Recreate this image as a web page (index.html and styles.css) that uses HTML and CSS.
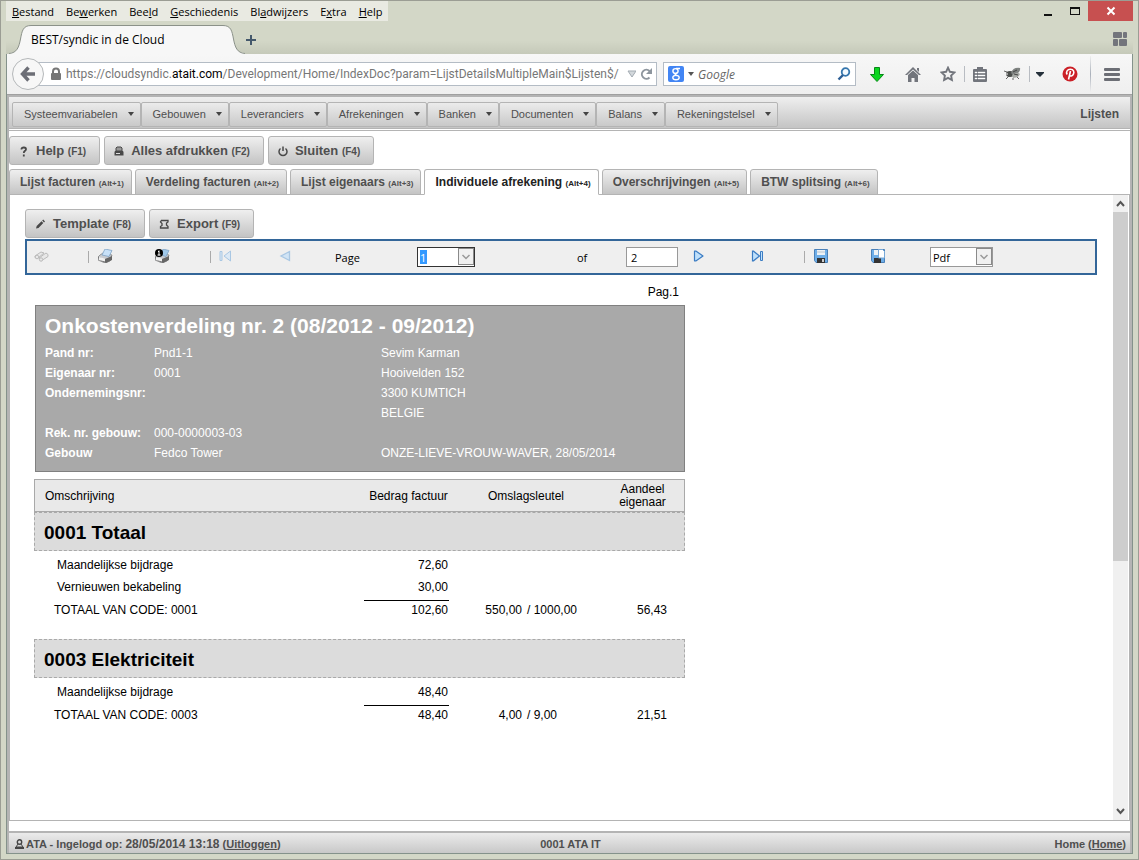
FILE: index.html
```html
<!DOCTYPE html>
<html lang="nl">
<head>
<meta charset="utf-8">
<title>BEST/syndic in de Cloud</title>
<link rel="stylesheet" href="styles.css">
</head>
<body>
<div class="window">
  <header class="titlebar">
    <nav class="menubar" aria-label="Menubalk">
      <button><u>B</u>estand</button><button>Be<u>w</u>erken</button><button>Bee<u>l</u>d</button><button><u>G</u>eschiedenis</button><button>Bl<u>a</u>dwijzers</button><button>E<u>x</u>tra</button><button><u>H</u>elp</button>
    </nav>
    <div class="window-controls">
      <button aria-label="Minimaliseren"><svg width="12" height="12"><path d="M2 9h8v2H2z" fill="#111"/></svg></button>
      <button aria-label="Maximaliseren"><svg width="12" height="9"><path d="M1 0h10v8H1zM2 2v5h8V2z" fill="#111" fill-rule="evenodd"/></svg></button>
      <button class="close" aria-label="Sluiten"><svg width="10" height="10"><path d="M1.500 1.500l7 7M8.500 1.500l-7 7" stroke="#fff" stroke-width="2"/></svg></button>
    </div>
  </header>

  <div class="tabstrip">
    <svg class="curve" width="22" height="29" viewBox="0 0 22 29"><path d="M0 29V28C8 28 10 22 11.500 14S14 .5 22 .5V29z" fill="#f7f7f7"/><path d="M0 28.500C8 28 10 22 11.500 14S14 .5 22 .5" fill="none" stroke="#8b9189"/></svg>
    <div class="browser-tab">BEST/syndic in de Cloud</div>
    <svg class="curve" width="22" height="29" viewBox="0 0 22 29"><path d="M22 29V28C14 28 12 22 10.500 14S8 .5 0 .5V29z" fill="#f7f7f7"/><path d="M22 28.500C14 28 12 22 10.500 14S8 .5 0 .5" fill="none" stroke="#8b9189"/></svg>
    <button class="new-tab" aria-label="Nieuw tabblad"><svg width="12" height="12"><path d="M5 1h2v4h4v2H7v4H5V7H1V5h4z" fill="#44586b"/></svg></button>
    <button class="groups" aria-label="Tabgroepen"><svg width="14" height="14" fill="#73757c"><rect width="9" height="6" rx="1"/><rect x="10" width="4" height="6" rx="1"/><rect y="7" width="5" height="7" rx="1"/><rect x="6" y="7" width="8" height="7" rx="1"/></svg></button>
  </div>

  <div class="page-frame">
    <div class="navbar">
      <button class="back" aria-label="Terug"><svg width="16" height="16"><path d="M8.500 1.500L2.500 8l6 6.500M3 8h12" fill="none" stroke="#6c6e76" stroke-width="3.400"/></svg></button>
      <div class="location">
        <svg width="12" height="14"><path d="M3 7V4.500a3 3 0 0 1 6 0V7" fill="none" stroke="#777" stroke-width="2"/><rect x="1" y="6" width="10" height="7" rx="1" fill="#777"/></svg>
        <div class="url" role="textbox" contenteditable="true" spellcheck="false" aria-label="Adres">https://cloudsyndic.<b>atait.com</b>/Development/Home/IndexDoc?param=LijstDetailsMultipleMain$Lijsten$/</div>
        <svg width="10" height="8"><path d="M1 1h8L5 7z" fill="#d3d8dc" stroke="#a3abb2"/></svg>
        <button aria-label="Vernieuwen"><svg width="13" height="13"><path d="M9.500 9.500A4.500 4.500 0 1 1 9.500 3" fill="none" stroke="#8e969e" stroke-width="2"/><path d="M12 0v6H6z" fill="#8e969e"/></svg></button>
      </div>
      <div class="search">
        <svg width="16" height="16"><rect width="16" height="16" rx="2" fill="#4285f4"/><g fill="none" stroke="#fff" stroke-width="1.400"><ellipse cx="7.500" cy="5" rx="2.600" ry="2.400"/><path d="M8 2.500h4M9 7c-3 1-2 2 0 2.500"/><ellipse cx="8" cy="11.600" rx="3.200" ry="2.200"/></g></svg>
        <svg width="6" height="4"><path d="M0 0h6L3 4z" fill="#555"/></svg>
        <input type="text" placeholder="Google" aria-label="Zoeken">
        <svg width="14" height="14"><circle cx="8.500" cy="5" r="3.800" fill="#f4faff" stroke="#3576ad" stroke-width="1.800"/><path d="M6 8L1.500 12.500" stroke="#2d5f95" stroke-width="2.400"/></svg>
      </div>
      <div class="nav-icons">
        <button aria-label="Download"><svg width="14" height="15"><path d="M4.500.5h5v7h4L7 14.500.5 7.500h4z" fill="#0bd620" stroke="#078817"/></svg></button>
        <button aria-label="Startpagina"><svg width="16" height="15" fill="#72757c"><path d="M8 0l8 8H14L8 2.500 2 8H0z"/><path d="M12 1h2v4l-2-2zM3 8l5-4.500L13 8v7H9.500v-4h-3v4H3z"/></svg></button>
        <button aria-label="Bladwijzer"><svg width="16" height="16"><path d="M8 1.700l1.900 4.100 4.500.6-3.300 3.100.8 4.500L8 11.900 4.100 14l.8-4.500L1.600 6.400l4.500-.6z" fill="none" stroke="#72757c" stroke-width="1.900"/></svg></button>
        <i></i>
        <button aria-label="Bladwijzers tonen"><svg width="14" height="15"><path d="M1 2h3V0h6v2h3q1 0 1 1v11q0 1-1 1H1q-1 0-1-1V3q0-1 1-1z" fill="#72757c"/><path d="M2 5h2v1H2zM5 5h7v1H5zM2 8h2v1H2zM5 8h7v1H5zM2 11h2v1H2zM5 11h7v1H5z" fill="#fff" stroke="#fff" stroke-width=".4"/></svg></button>
        <button aria-label="Firebug"><svg width="17" height="14"><path d="M3 5L0 4M5 9L2 12M9 11v2M13 10l2 2" stroke="#666"/><ellipse cx="6" cy="7" rx="4" ry="3" fill="#4b4e4c"/><path d="M7 6q2-6 9-5 1 4-6 8z" fill="#7e8280"/><path d="M8 8q5-4 8-1-1 4-7 4z" fill="#a6a9a5"/><path d="M9 5l4-2M10 7l4 1" stroke="#444"/><circle cx="3" cy="7" r="1" fill="#bbb"/></svg></button>
        <i></i>
        <button aria-label="Meer"><svg width="8" height="5"><path d="M0 0h8v1L4 5 0 1z" fill="#25303b"/></svg></button>
        <button aria-label="Pinterest"><svg width="16" height="16"><circle cx="8" cy="8" r="7.500" fill="#cb2027"/><path d="M6.500 13.500L8.500 5M5.200 8.500C3.500 6 5.500 3.200 8.500 3.300c3 .1 4 2.600 2.900 4.900-1 2.200-3.100 2.200-3.800.8" fill="none" stroke="#fff" stroke-width="1.600"/></svg></button>
        <i class="tall"></i>
        <button aria-label="Menu"><svg width="16" height="13" fill="#6c6e75"><rect width="16" height="3" rx="1"/><rect y="5" width="16" height="3" rx="1"/><rect y="10" width="16" height="3" rx="1"/></svg></button>
      </div>
    </div>

    <div class="app">
      <div class="app-menu">
        <nav aria-label="Hoofdmenu">
          <button>Systeemvariabelen</button><button>Gebouwen</button><button>Leveranciers</button><button>Afrekeningen</button><button>Banken</button><button>Documenten</button><button>Balans</button><button>Rekeningstelsel</button>
        </nav>
        <strong>Lijsten</strong>
      </div>
      <main>
        <div class="actions">
          <button class="action"><svg width="12" height="12"><path d="M3.500 4.500V3.800C4 2 8 2 8 4.200 8 6 5.800 5.500 5.800 8M5.800 9.500v2" fill="none" stroke="#484848" stroke-width="1.800"/></svg>Help <small>(F1)</small></button>
          <button class="action"><svg width="12" height="12"><path d="M3 6V3l1-1h4l1 1v3z" fill="#999" stroke="#484848"/><path d="M2 6h8l.5 1v3.500h-9V7z" fill="#484848"/><path d="M3 8.500h4" stroke="#ddd"/></svg>Alles afdrukken <small>(F2)</small></button>
          <button class="action"><svg width="12" height="12"><path d="M3.500 3.500a4 4 0 1 0 5 0M6 1.500V6" fill="none" stroke="#484848" stroke-width="1.500"/></svg>Sluiten <small>(F4)</small></button>
        </div>
        <div class="tabs" role="tablist">
          <button role="tab">Lijst facturen <small>(Alt+1)</small></button>
          <button role="tab">Verdeling facturen <small>(Alt+2)</small></button>
          <button role="tab">Lijst eigenaars <small>(Alt+3)</small></button>
          <button role="tab" class="active" aria-selected="true">Individuele afrekening <small>(Alt+4)</small></button>
          <button role="tab">Overschrijvingen <small>(Alt+5)</small></button>
          <button role="tab">BTW splitsing <small>(Alt+6)</small></button>
        </div>
        <section class="panel">
          <div class="panel-content">
            <div class="actions">
              <button class="action"><svg width="12" height="12"><path d="M2 10.500l.7-2.400 4.800-4.800 1.800 1.800-4.800 4.800zM8.200 2.600l1-1 1.800 1.800-1 1z" fill="#484848"/></svg>Template <small>(F8)</small></button>
              <button class="action"><svg width="12" height="12"><path d="M3.500 2.500h6.500v1.500L8.500 5v2l1.500 1.500V10H2.500V8.500L4 7.500v-2L2.500 4z" fill="none" stroke="#484848" stroke-width="1.300"/></svg>Export <small>(F9)</small></button>
            </div>
            <div class="viewer-bar">
              <button aria-label="Zoeken"><svg width="15" height="12"><g stroke="#bbb" fill="#e8e8e8"><path d="M1 6l6-4 3 1-6 5-3-.5z"/><path d="M5 8l7-5 2 1.500v2L7 11z"/><circle cx="3" cy="7" r="1.800"/><circle cx="7" cy="9.500" r="1.700"/></g></svg></button>
              <i></i>
              <button aria-label="Afdrukken"><svg width="15" height="14"><path d="M2 6l3-2 9 2-2 6-5 2-7-3V8z" fill="#c8cbd0" stroke="#777" stroke-width=".7"/><path d="M0 8l7 2 7-3v4l-6 3-7-3z" fill="#666"/><path d="M1 8l6 1.500v3L1 11z" fill="#f0f0f0"/><path d="M4 6l3-6 7 1.500-3 6z" fill="#c8e1f8" stroke="#7fa3c6" stroke-width=".8"/></svg></button>
              <button aria-label="Huidige pagina afdrukken"><svg width="15" height="14"><path d="M2 6l3-2 9 2-2 6-5 2-7-3V8z" fill="#c8cbd0" stroke="#777" stroke-width=".7"/><path d="M0 8l7 2 7-3v4l-6 3-7-3z" fill="#666"/><path d="M1 8l6 1.500v3L1 11z" fill="#f0f0f0"/><path d="M6 6l2-6 6 1.500-3 6z" fill="#9fc8ea" stroke="#7fa3c6" stroke-width=".8"/><circle cx="4" cy="4" r="4"/><path d="M4 1.500v5M2.500 6h3M3 2.500h1" stroke="#fff"/></svg></button>
              <i></i>
              <button aria-label="Eerste pagina"><svg width="13" height="12"><path d="M1 1.500h2v9H1zM11.500 1v10L5 6z" fill="#dbe9f6" stroke="#a9c7e3"/></svg></button>
              <button aria-label="Vorige pagina"><svg width="12" height="12"><path d="M10.500 1.500v9L2 6z" fill="#d1e4f5" stroke="#a9c7e3" stroke-width="1.300"/></svg></button>
              <label for="page">Page</label>
              <span class="combo page-combo"><select id="page"><option>1</option><option>2</option></select><svg width="16" height="17"><rect x=".5" y=".5" width="15" height="16" fill="#f0f0f0" stroke="#8a8a8a"/><path d="M4.500 7L8 10.500 11.500 7" fill="none" stroke="#999" stroke-width="1.500"/></svg></span>
              <label for="total">of</label>
              <input class="total" id="total" type="text" value="2" readonly>
              <button aria-label="Volgende pagina"><svg width="12" height="12"><path d="M1.500 1.200v9.600h1.700L10 6 3.200 1.200z" fill="#bfe0fb" stroke="#3b7cc3" stroke-width="1.200" stroke-linejoin="round"/></svg></button>
              <button aria-label="Laatste pagina"><svg width="13" height="12"><path d="M1.500 1.200v9.600h1L8.500 6l-6-4.800z" fill="#bfe0fb" stroke="#3b7cc3" stroke-width="1.200"/><path d="M9.500 1.500h2v9h-2z" fill="#bfe0fb" stroke="#3b7cc3"/></svg></button>
              <i></i>
              <button aria-label="Opslaan"><svg width="14" height="14"><path d="M.5.5h13v13H2l-1.500-2z" fill="#6eaee8" stroke="#4a80b8"/><path d="M3 1h8v5H3z" fill="#edf2f6"/><path d="M3 3h8" stroke="#b9c5d0"/><path d="M3 9h8v5H3z" fill="#333"/><path d="M8 10h2v3H8z" fill="#ccc"/></svg></button>
              <button aria-label="Opslaan in venster"><svg width="14" height="14"><path d="M.5.5h13v13H2l-1.500-2z" fill="#6eaee8" stroke="#4a80b8"/><path d="M3 1h5v5H3z" fill="#edf2f6"/><path d="M3 9h7v5H3z" fill="#333"/><path d="M7.500.5h4l2 2V9h-6z" fill="#fff" stroke="#76a8d8"/></svg></button>
              <span class="combo format-combo"><select aria-label="Formaat"><option>Pdf</option></select><svg width="16" height="17"><rect x=".5" y=".5" width="15" height="16" fill="#f0f0f0" stroke="#8a8a8a"/><path d="M4.500 7L8 10.500 11.500 7" fill="none" stroke="#999" stroke-width="1.500"/></svg></span>
            </div>

            <article class="report">
              <p class="page-no">Pag.1</p>
              <header class="summary">
                <h1>Onkostenverdeling nr. 2 (08/2012 - 09/2012)</h1>
                <div class="details">
                  <b>Pand nr:</b><span>Pnd1-1</span><span>Sevim Karman</span>
                  <b>Eigenaar nr:</b><span>0001</span><span>Hooivelden 152</span>
                  <b>Ondernemingsnr:</b><span></span><span>3300 KUMTICH</span>
                  <span></span><span></span><span>BELGIE</span>
                  <b>Rek. nr. gebouw:</b><span>000-0000003-03</span><span></span>
                  <b>Gebouw</b><span>Fedco Tower</span><span>ONZE-LIEVE-VROUW-WAVER, 28/05/2014</span>
                </div>
              </header>
              <table>
                <colgroup><col><col class="c-amount"><col class="c-key"><col class="c-base"><col class="c-share"></colgroup>
                <thead><tr><th class="first">Omschrijving</th><th>Bedrag factuur</th><th colspan="2">Omslagsleutel</th><th>Aandeel eigenaar</th></tr></thead>
                <tbody>
                  <tr class="section"><th colspan="5"><h2>0001 Totaal</h2></th></tr>
                  <tr class="item"><td>Maandelijkse bijdrage</td><td>72,60</td><td></td><td></td><td></td></tr>
                  <tr class="item"><td>Vernieuwen bekabeling</td><td>30,00</td><td></td><td></td><td></td></tr>
                  <tr class="sum"><td>TOTAAL VAN CODE: 0001</td><td class="amount"><div>102,60</div></td><td>550,00</td><td class="base">/ 1000,00</td><td class="share">56,43</td></tr>
                </tbody>
                <tbody>
                  <tr class="section"><th colspan="5"><h2>0003 Elektriciteit</h2></th></tr>
                  <tr class="item"><td>Maandelijkse bijdrage</td><td>48,40</td><td></td><td></td><td></td></tr>
                  <tr class="sum"><td>TOTAAL VAN CODE: 0003</td><td class="amount"><div>48,40</div></td><td>4,00</td><td class="base">/ 9,00</td><td class="share">21,51</td></tr>
                </tbody>
              </table>
            </article>
          </div>
          <div class="scrollbar" aria-hidden="true">
            <svg width="15" height="17"><path d="M4 11l3.500-4L11 11" fill="none" stroke="#555" stroke-width="2"/></svg>
            <div class="track"><div class="thumb"></div></div>
            <svg width="15" height="17"><path d="M4 6l3.500 4L11 6" fill="none" stroke="#555" stroke-width="2"/></svg>
          </div>
        </section>
      </main>
      <footer>
        <span class="user"><svg width="9" height="10"><circle cx="4.500" cy="3" r="2.200" fill="none" stroke="#444" stroke-width="1.400"/><path d="M3 5L1 8h7L6 5" fill="none" stroke="#444"/><path d="M0 8h9v2H0z" fill="#444"/></svg>ATA - Ingelogd op: <b>28/05/2014 13:18</b> (<a href="#">Uitloggen</a>)</span>
        <span>0001 ATA IT</span>
        <span class="home">Home (<a href="#">Home</a>)</span>
      </footer>
    </div>
  </div>
</div>
</body>
</html>
```

FILE: styles.css
```css
* { box-sizing: border-box; }
body { margin: 0; font-family: "Liberation Sans", Arial, sans-serif; font-size: 12px; color: #000; }
button, input, select { font: inherit; color: inherit; margin: 0; }
button { border: 0; padding: 0; background: none; display: flex; align-items: center; justify-content: center; }
svg { display: block; flex: none; }
a { color: inherit; }

.window {
  height: 100vh; display: flex; flex-direction: column;
  border: 1px solid #9b9d94; background: #d3d7c7; padding: 0 5px 5px;
}

.titlebar { display: flex; justify-content: space-between; height: 20px; font-family: "Open Sans", "Noto Sans", sans-serif; font-size: 11px; }
.menubar { display: flex; gap: 12px; padding: 0 6px; background: #e9eae2; }
.window-controls { display: flex; }
.window-controls button { width: 27px; }
.window-controls .close { width: 45px; background: #c75050; }

.tabstrip {
  display: flex; align-items: flex-end; height: 33px; padding-left: 3px; margin-bottom: -1px;
  position: relative; z-index: 1;
  font-family: "Open Sans", "Noto Sans", sans-serif;
  background: linear-gradient(#d3d7c7 60%, #c5c9b9);
}
.browser-tab { width: 192px; height: 29px; background: #f7f7f7; border-top: 1px solid #8b9189; line-height: 28px; }
.new-tab { width: 12px; height: 28px; }
.groups { margin-left: auto; width: 26px; height: 30px; }

.page-frame { flex: 1; min-height: 0; display: flex; flex-direction: column; border: 1px solid #84928b; }
.navbar {
  display: flex; align-items: center; height: 41px; padding-left: 5px;
  background: linear-gradient(#f7f7f7, #efefef); border-bottom: 1px solid #a0a0a0;
  font-family: "Open Sans", "Noto Sans", sans-serif; font-size: 12px;
}
.back { width: 32px; height: 32px; border: 1px solid #b5b8ba; border-radius: 50%; background: #f7f7f7; position: relative; z-index: 1; flex: none; }
.location, .search { display: flex; align-items: center; height: 24px; background: #fff; border: 1px solid #b4bcc5; }
.location { flex: 1; min-width: 0; margin-left: -12px; padding: 0 3px 0 17px; gap: 4px; }
.url { flex: 1; min-width: 0; overflow: hidden; white-space: nowrap; color: #777; line-height: 20px; font-family: Roboto, sans-serif; }
.url b { font-weight: normal; color: #000; }
.location svg:nth-of-type(2) { width: 9px; }
.search { width: 193px; margin: 0 3px 0 6px; padding: 0 4px; gap: 4px; }
.search input { flex: 1; min-width: 0; border: 0; padding: 0; background: none; font-style: italic; }
.search input::placeholder { color: #666; opacity: 1; }
.nav-icons { display: grid; grid-template-columns: 36px 36px 33px 1px 30px 34px 1px 20px 40px 1px 41px; align-items: center; height: 40px; }
.nav-icons button { height: 24px; }
.nav-icons i { height: 16px; background: #b8bcc2; }
.nav-icons .tall { height: 36px; background: linear-gradient(#efefef, #a9b0ba, #efefef); }

.app { flex: 1; min-height: 0; display: flex; flex-direction: column; background: #fff; border: 2px solid #b4b4b4; border-bottom: 0; color: #4f4f4f; }
.app-menu {
  display: flex; align-items: center; justify-content: space-between; height: 32px; padding: 3px 11px 0 3px;
  background: linear-gradient(#efefef, #c4c4c4); border-bottom: 1px solid #b4b4b4;
}
.app-menu nav { display: flex; }
.app-menu button {
  height: 25px; font-size: 11px; padding: 0 6px 0 11px; border: 1px solid #b4b4b4; border-radius: 2px;
  background: linear-gradient(#ebebeb, #c9c9c9);
}
.app-menu button::after { content: ""; margin-left: 10px; border: 3px solid transparent; border-top: 4px solid #444; border-bottom: 0; }

main { flex: 1; min-height: 0; display: flex; flex-direction: column; margin-top: 1px; padding-bottom: 10px; background: #fff; border-top: 1px solid #b4b4b4; }
.actions { display: flex; gap: 4px; }
main > .actions { padding-top: 5px; }
.action {
  height: 29px; padding: 0 13px 0 8px; border: 1px solid #b4b4b4; border-radius: 3px;
  background: linear-gradient(#efefef, #c4c4c4); font-weight: bold; font-size: 13px; white-space: pre;
}
.action svg { margin-right: 6px; }
.action small { font-size: 10px; padding-top: 2px; }

.tabs { display: flex; gap: 3px; margin-top: 4px; position: relative; z-index: 1; }
.tabs button {
  height: 26px; padding: 0 7px 0 10px; border: 1px solid #b4b4b4; border-radius: 3px 3px 0 0;
  background: linear-gradient(#efefef, #c4c4c4); font-size: 12px; font-weight: bold; white-space: pre;
}
.tabs small { font-size: 8px; padding-top: 2px; }
.tabs .active { background: #fff; border-bottom-color: #fff; color: #222; }

.panel { flex: 1; min-height: 0; display: flex; margin-top: -1px; border: 1px solid #b4b4b4; color: #000; }
.panel-content { flex: 1; min-width: 0; padding: 14px 16px 0 15px; overflow: hidden; }
.panel .actions { color: #4f4f4f; }
.panel .action svg { margin-right: 7px; }
.scrollbar { width: 15px; margin-right: 1px; display: flex; flex-direction: column; background: #f0f0f0; }
.track { flex: 1; }
.thumb { height: 59%; background: #cdcdcd; }

.viewer-bar {
  display: grid; align-items: center; height: 36px; margin-top: 1px; padding-left: 7px;
  grid-template-columns: 54px 10px 57px 55px 9px 60px 56px 82px 160px 49px 67px 58px 53px 10px 57px 59px 1fr;
  background: #efefef; border: 2px solid #369; font-family: "Open Sans", "Noto Sans", sans-serif; font-size: 11px;
}
.viewer-bar button { justify-content: flex-start; padding-bottom: 2px; }
.viewer-bar i { width: 1px; height: 12px; background: #aaa; }
.total { width: 52px; height: 20px; border: 1px solid #999; padding: 0 4px; background: #fff; }
.combo { position: relative; height: 20px; border: 1px solid #999; background: #fff; }
.combo select { appearance: none; width: 100%; height: 18px; border: 0; padding: 0 2px; background: none; display: block; }
.combo svg { position: absolute; right: 0; top: 0; pointer-events: none; }
.page-combo { width: 58px; border-color: #333; }
.page-combo select { color: #fff; background: linear-gradient(#39f, #39f) 2px center / 7px 14px no-repeat; }
.format-combo { width: 63px; }

.report { max-width: 651px; margin-left: 9px; }
.page-no { margin: 0; padding: 10px 6px 6px 0; text-align: right; line-height: 14px; }
.summary { margin-left: 1px; height: 167px; padding: 8px 9px; background: #a9a9a9; border: 1px solid #808080; color: #fff; }
.summary h1 { margin: 0 0 6px; font-size: 21px; line-height: 23px; }
.details { display: grid; grid-template-columns: 109px 227px 1fr; grid-auto-rows: 20px; line-height: 20px; }

table { width: 100%; margin-top: 7px; table-layout: fixed; border-spacing: 0; }
.c-amount { width: 85px; }
.c-key { width: 75px; }
.c-base { width: 79px; }
.c-share { width: 82px; }
td, th { padding: 0; }
thead th { height: 33px; padding: 1px 6px 0 0; font-weight: normal; line-height: 13px; background: #e9e9e9; border: solid #a9a9a9; border-width: 1px 0; }
thead th:nth-child(3) { padding: 1px 0 0; }
thead th:nth-child(2) { padding: 1px 0 0 4px; white-space: nowrap; }
thead .first { border-left-width: 1px; padding-left: 10px; text-align: left; }
thead th:last-child { border-right-width: 1px; padding: 1px 16px 0 14px; }
.section th { padding-bottom: 3px; }
.section h2 { margin: 0; height: 39px; padding-left: 9px; line-height: 39px; font-size: 19px; text-align: left; background: #dcdcdc; border: 1px dashed #a9a9a9; }
.item { height: 22px; }
td { text-align: right; }
td:first-child { text-align: left; padding-left: 20px; }
.item td:first-child { padding-left: 23px; }
.sum { height: 41px; line-height: 18px; }
.sum td { vertical-align: top; padding-top: 3px; }
.sum td:nth-child(3) { padding-right: 2px; }
.sum .amount { padding-top: 2px; }
.amount div { border-top: 1px solid #000; padding-right: 1px; }
.item td:nth-child(2) { padding-right: 1px; }
.sum .base { text-align: left; padding-left: 3px; }
.sum .share { padding-right: 18px; }

footer {
  display: grid; grid-template-columns: 1fr auto 1fr; align-items: center; height: 22px; padding: 1px 4px 0 6px;
  border-top: 2px solid #b4b4b4; background: linear-gradient(#ebebeb, #c8c8c8); font-size: 11px; font-weight: bold;
}
.user { display: flex; align-items: center; white-space: pre; }
.user svg { margin-right: 2px; }
.user b { font-size: 12px; }
.home { text-align: right; }
```
